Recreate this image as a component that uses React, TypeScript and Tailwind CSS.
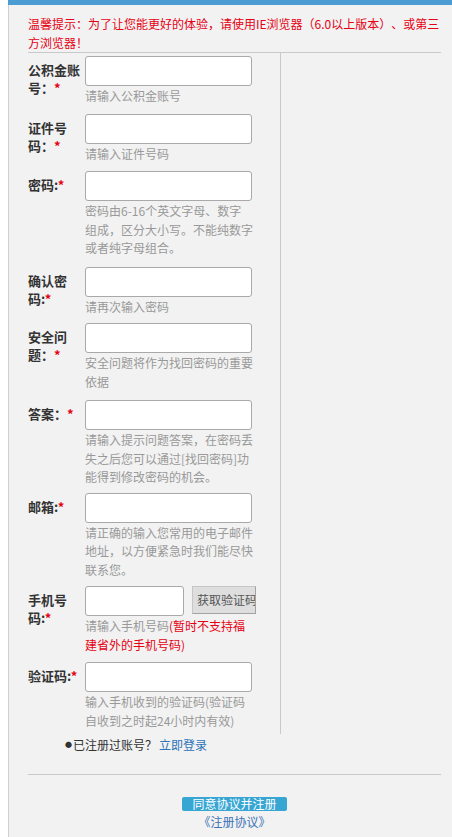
import React from "react";

type Row = {
  label: string[];
  hint: React.ReactNode[];
  type?: string;
  mb: string;
  phone?: boolean;
};

const rows: Row[] = [
  { label: ["公积金账", "号："], hint: ["请输入公积金账号"], mb: "mb-[8px]" },
  { label: ["证件号", "码："], hint: ["请输入证件号码"], mb: "mb-[8px]" },
  {
    label: ["密码:"],
    type: "password",
    hint: ["密码由6-16个英文字母、数字", "组成，区分大小写。不能纯数字", "或者纯字母组合。"],
    mb: "mb-[9px]",
  },
  { label: ["确认密", "码:"], type: "password", hint: ["请再次输入密码"], mb: "mb-[7px]" },
  { label: ["安全问", "题："], hint: ["安全问题将作为找回密码的重要", "依据"], mb: "mb-[9px]" },
  {
    label: ["答案："],
    hint: ["请输入提示问题答案，在密码丢", "失之后您可以通过[找回密码]功", "能得到修改密码的机会。"],
    mb: "mb-[6px]",
  },
  {
    label: ["邮箱:"],
    hint: ["请正确的输入您常用的电子邮件", "地址，以方便紧急时我们能尽快", "联系您。"],
    mb: "mb-[7px]",
  },
  {
    label: ["手机号", "码:"],
    phone: true,
    hint: [
      <>
        请输入手机号码<span className="text-[#e60012]">(暂时不支持福</span>
      </>,
      <span className="text-[#e60012]">建省外的手机号码)</span>,
    ],
    mb: "mb-[8px]",
  },
  { label: ["验证码:"], hint: ["输入手机收到的验证码(验证码", "自收到之时起24小时内有效)"], mb: "mb-[4px]" },
];

function FormRow({ row }: { row: Row }) {
  return (
    <div className={`flex ${row.mb}`}>
      <div className="w-[57px] shrink-0 pt-[5px] text-[13px] font-bold leading-[18px] text-[#333]">
        {row.label.map((l, i) => (
          <div key={i} className="whitespace-nowrap">
            {l}
            {i === row.label.length - 1 && <span className="text-[#e60012]">*</span>}
          </div>
        ))}
      </div>
      <div>
        {row.phone ? (
          <div className="flex items-start">
            <input type="text" className="block h-[30px] w-[99px] rounded-[3px] border border-[#a9a9a9] bg-white outline-none" />
            <button className="ml-[8px] h-[28px] w-[64px] overflow-hidden whitespace-nowrap border border-[#c6c6c6] border-b-[#a3a3a3] border-r-[#a3a3a3] bg-[#dedede] pl-[4px] text-left text-[12px] text-[#555]">
              获取验证码
            </button>
          </div>
        ) : (
          <input
            type={row.type ?? "text"}
            className="block h-[30px] w-[167px] rounded-[3px] border border-[#a9a9a9] bg-white outline-none"
          />
        )}
        <div className="mt-[1px] text-[12px] leading-[18.5px] text-[#999]">
          {row.hint.map((h, i) => (
            <div key={i} className="whitespace-nowrap">
              {h}
            </div>
          ))}
        </div>
      </div>
    </div>
  );
}

export default function App() {
  return (
    <div className="flex h-[837px] w-[452px] overflow-hidden bg-white font-['Noto_Sans_CJK_SC','Microsoft_YaHei',sans-serif] [text-spacing-trim:space-all]">
      <div className="w-[8px] shrink-0 bg-white" />
      <div className="flex flex-1 flex-col">
        <div className="h-[5px] bg-[#4b9cd3]" />
        <div className="flex-1 border-l border-[#cfcfcf] bg-[#f2f2f2] pl-[19px] pr-[11px]">
          <p className="pt-[10px] text-[12px] leading-[18.5px] text-[#e60012]">
            温馨提示：为了让您能更好的体验，请使用IE浏览器（6.0以上版本）、或第三
            <br />
            方浏览器！
          </p>

          <div className="flex border-t border-[#c9c9c9]">
            <div className="w-[253px] border-r border-[#c9c9c9] pt-[3px]">
              {rows.map((row, i) => (
                <FormRow key={i} row={row} />
              ))}
            </div>
            <div className="flex-1" />
          </div>

          <div className="mt-[1px] flex items-center pl-[37px] text-[12px] leading-[19px] text-[#333]">
            <span className="mr-[1px] text-[7px]">●</span>
            已注册过账号？
            <a href="#" className="ml-[2px] text-[#2d74b8]">
              立即登录
            </a>
          </div>

          <div className="mt-[20px] border-t border-[#c9c9c9]" />

          <div className="flex flex-col items-center">
            <button className="mt-[22px] h-[14px] w-[105px] rounded-[2px] bg-[#38a6d3] text-[12px] leading-[14px] text-white">
              同意协议并注册
            </button>
            <a href="#" className="mt-[2px] text-[12px] leading-[18px] text-[#3b72b8]">
              《注册协议》
            </a>
          </div>
        </div>
      </div>
    </div>
  );
}
